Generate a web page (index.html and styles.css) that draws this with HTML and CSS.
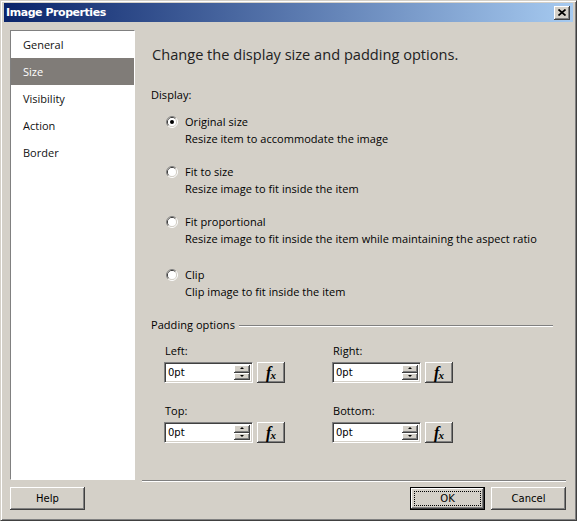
FILE: index.html
```html
<!DOCTYPE html>
<html>
<head>
<meta charset="utf-8">
<link rel="stylesheet" href="styles.css">
</head>
<body>
<div class="window">
  <div class="titlebar">
    <span class="title">Image Properties</span>
    <span class="close"><svg width="8" height="7" viewBox="0 0 8 7"><path d="M0.5 0.5 L7.5 6.5 M7.5 0.5 L0.5 6.5" stroke="#000" stroke-width="1.7" fill="none"/></svg></span>
  </div>
  <div class="main">
    <ul class="nav">
      <li>General</li>
      <li class="sel">Size</li>
      <li>Visibility</li>
      <li>Action</li>
      <li>Border</li>
    </ul>
    <div class="panel">
      <h1 class="heading">Change the display size and padding options.</h1>
      <div class="section-label">Display:</div>
      <div class="options">
        <div class="opt">
          <svg class="radio" width="12" height="12" viewBox="0 0 12 12"><path d="M2.11 9.89 A5.5 5.5 0 0 1 9.89 2.11" stroke="#808080" fill="none"/><path d="M9.89 2.11 A5.5 5.5 0 0 1 2.11 9.89" stroke="#fff" fill="none"/><path d="M2.82 9.18 A4.5 4.5 0 0 1 9.18 2.82" stroke="#404040" fill="none"/><path d="M9.18 2.82 A4.5 4.5 0 0 1 2.82 9.18" stroke="#d4d0c8" fill="none"/><circle cx="6" cy="6" r="4" fill="#fff"/><circle cx="6" cy="6" r="2" fill="#000"/></svg>
          <div class="opt-text"><div>Original size</div><div>Resize item to accommodate the image</div></div>
        </div>
        <div class="opt">
          <svg class="radio" width="12" height="12" viewBox="0 0 12 12"><path d="M2.11 9.89 A5.5 5.5 0 0 1 9.89 2.11" stroke="#808080" fill="none"/><path d="M9.89 2.11 A5.5 5.5 0 0 1 2.11 9.89" stroke="#fff" fill="none"/><path d="M2.82 9.18 A4.5 4.5 0 0 1 9.18 2.82" stroke="#404040" fill="none"/><path d="M9.18 2.82 A4.5 4.5 0 0 1 2.82 9.18" stroke="#d4d0c8" fill="none"/><circle cx="6" cy="6" r="4" fill="#fff"/></svg>
          <div class="opt-text"><div>Fit to size</div><div>Resize image to fit inside the item</div></div>
        </div>
        <div class="opt">
          <svg class="radio" width="12" height="12" viewBox="0 0 12 12"><path d="M2.11 9.89 A5.5 5.5 0 0 1 9.89 2.11" stroke="#808080" fill="none"/><path d="M9.89 2.11 A5.5 5.5 0 0 1 2.11 9.89" stroke="#fff" fill="none"/><path d="M2.82 9.18 A4.5 4.5 0 0 1 9.18 2.82" stroke="#404040" fill="none"/><path d="M9.18 2.82 A4.5 4.5 0 0 1 2.82 9.18" stroke="#d4d0c8" fill="none"/><circle cx="6" cy="6" r="4" fill="#fff"/></svg>
          <div class="opt-text"><div>Fit proportional</div><div>Resize image to fit inside the item while maintaining the aspect ratio</div></div>
        </div>
        <div class="opt opt-last">
          <svg class="radio" width="12" height="12" viewBox="0 0 12 12"><path d="M2.11 9.89 A5.5 5.5 0 0 1 9.89 2.11" stroke="#808080" fill="none"/><path d="M9.89 2.11 A5.5 5.5 0 0 1 2.11 9.89" stroke="#fff" fill="none"/><path d="M2.82 9.18 A4.5 4.5 0 0 1 9.18 2.82" stroke="#404040" fill="none"/><path d="M9.18 2.82 A4.5 4.5 0 0 1 2.82 9.18" stroke="#d4d0c8" fill="none"/><circle cx="6" cy="6" r="4" fill="#fff"/></svg>
          <div class="opt-text"><div>Clip</div><div>Clip image to fit inside the item</div></div>
        </div>
      </div>
      <div class="group-head"><span>Padding options</span><span class="etch"></span></div>
      <div class="pad-grid">
        <div class="field">
          <div class="field-label">Left:</div>
          <div class="field-row">
            <div class="spin"><span class="val">0pt</span><span class="spin-btns"><span class="sb"><span class="arr-up"></span></span><span class="sb"><span class="arr-dn"></span></span></span></div>
            <span class="fx"><span class="f">f</span><span class="x">x</span></span>
          </div>
        </div>
        <div class="field">
          <div class="field-label">Right:</div>
          <div class="field-row">
            <div class="spin"><span class="val">0pt</span><span class="spin-btns"><span class="sb"><span class="arr-up"></span></span><span class="sb"><span class="arr-dn"></span></span></span></div>
            <span class="fx"><span class="f">f</span><span class="x">x</span></span>
          </div>
        </div>
        <div class="field">
          <div class="field-label">Top:</div>
          <div class="field-row">
            <div class="spin"><span class="val">0pt</span><span class="spin-btns"><span class="sb"><span class="arr-up"></span></span><span class="sb"><span class="arr-dn"></span></span></span></div>
            <span class="fx"><span class="f">f</span><span class="x">x</span></span>
          </div>
        </div>
        <div class="field">
          <div class="field-label">Bottom:</div>
          <div class="field-row">
            <div class="spin"><span class="val">0pt</span><span class="spin-btns"><span class="sb"><span class="arr-up"></span></span><span class="sb"><span class="arr-dn"></span></span></span></div>
            <span class="fx"><span class="f">f</span><span class="x">x</span></span>
          </div>
        </div>
      </div>
    </div>
  </div>
  <div class="footer">
    <span class="btn">Help</span>
    <span class="spacer"></span>
    <span class="btn btn-default"><span class="focus">OK</span></span>
    <span class="btn">Cancel</span>
  </div>
</div>
</body>
</html>
```

FILE: styles.css
```css
html, body {
  margin: 0;
  padding: 0;
  background: #d4d0c8;
}
body {
  font-family: "Open Sans", "Noto Sans", sans-serif;
  color: #000;
}
.window {
  width: 577px;
  height: 521px;
  box-sizing: border-box;
  background: #d4d0c8;
  border: 1px solid;
  border-color: #d4d0c8 #404040 #404040 #d4d0c8;
  box-shadow: inset 1px 1px #fff, inset -1px -1px #808080;
  padding: 2px 3px 3px 3px;
  display: flex;
  flex-direction: column;
}
.titlebar {
  height: 19px;
  flex: none;
  background: linear-gradient(to right, #0a246a, #a6caf0);
  display: flex;
  align-items: center;
  justify-content: space-between;
  padding: 0 3px 0 2px;
}
.title {
  color: #fff;
  font-family: "DejaVu Sans", sans-serif;
  font-weight: bold;
  font-size: 11px;
  letter-spacing: -0.45px;
}
.close {
  width: 16px;
  height: 14px;
  box-sizing: border-box;
  background: #d4d0c8;
  box-shadow: inset -1px -1px #404040, inset 1px 1px #fff, inset -2px -2px #808080;
  display: flex;
  align-items: center;
  justify-content: center;
  padding: 0 1px 1px 0;
}
.close svg { display: block; }
.main {
  flex: 1;
  display: flex;
  margin-top: 8px;
  padding: 0 7px 0 6px;
  min-height: 0;
}
.nav {
  list-style: none;
  margin: 0 0 1px 0;
  padding: 0;
  width: 125px;
  box-sizing: border-box;
  background: #fff;
  border: 1px solid;
  border-color: #808080 #fff #fff #808080;
  font-size: 11px;
}
.nav li {
  height: 27px;
  line-height: 27px;
  padding-left: 12px;
  color: #111;
}
.nav li.sel {
  background: #807c78;
  color: #fff;
}
.panel {
  flex: 1;
  margin-left: 7px;
  border-bottom: 1px solid #808080;
  box-shadow: 0 1px #fff;
  padding: 14px 13px 0 9px;
  font-size: 11px;
  letter-spacing: 0.05px;
}
.heading {
  margin: 0 0 0 1px;
  font-size: 14.6px;
  line-height: 20px;
  font-weight: normal;
  letter-spacing: 0;
  color: #222;
}
.section-label {
  margin-top: 23px;
  line-height: 16px;
}
.options {
  margin-top: 10px;
}
.opt {
  display: flex;
  align-items: flex-start;
  padding-left: 15px;
  line-height: 17px;
}
.opt + .opt { margin-top: 16px; }
.opt.opt-last { margin-top: 19px; }
.radio {
  flex: none;
  margin: 3px 7px 0 0;
  display: block;
}
.group-head {
  margin-top: 17px;
  line-height: 16px;
  display: flex;
  align-items: center;
  gap: 4px;
}
.etch {
  flex: 1;
  height: 1px;
  background: #808080;
  box-shadow: 0 1px #fff;
}
.pad-grid {
  margin-top: 10px;
  padding-left: 13px;
  display: grid;
  grid-template-columns: 168px 168px;
  row-gap: 20px;
}
.field-label {
  line-height: 16px;
  padding-left: 1px;
}
.field-row {
  margin-top: 3px;
  display: flex;
  gap: 4px;
}
.spin {
  width: 89px;
  height: 21px;
  box-sizing: border-box;
  background: #fff;
  border: 1px solid;
  border-color: #808080 #fff #fff #808080;
  box-shadow: inset 1px 1px #404040, inset -1px -1px #d4d0c8;
  display: flex;
  align-items: stretch;
  padding: 2px 2px 2px 3px;
}
.val {
  flex: 1;
  font-family: "DejaVu Sans", sans-serif;
  font-size: 10px;
  line-height: 15px;
  letter-spacing: 0;
}
.spin-btns {
  width: 16px;
  display: flex;
  flex-direction: column;
}
.sb {
  flex: 1;
  background: #d4d0c8;
  box-shadow: inset -1px -1px #404040, inset 1px 1px #fff, inset -2px -2px #808080;
  display: flex;
  align-items: center;
  justify-content: center;
}
.arr-up {
  width: 0;
  height: 0;
  border-left: 2px solid transparent;
  border-right: 2px solid transparent;
  border-bottom: 2px solid #000;
  margin: 0 1px 1px 0;
}
.arr-dn {
  width: 0;
  height: 0;
  border-left: 2px solid transparent;
  border-right: 2px solid transparent;
  border-top: 2px solid #000;
  margin: 0 1px 1px 0;
}
.fx {
  width: 28px;
  height: 21px;
  box-sizing: border-box;
  background: #d4d0c8;
  box-shadow: inset -1px -1px #404040, inset 1px 1px #fff, inset -2px -2px #808080;
  display: flex;
  align-items: center;
  justify-content: center;
  font-family: "Liberation Serif", serif;
  font-weight: bold;
  font-style: italic;
  color: #000;
}
.fx .f { font-size: 16px; line-height: 15px; }
.fx .x { font-size: 11px; line-height: 11px; margin-top: 5px; margin-left: -1px; }
.footer {
  flex: none;
  display: flex;
  gap: 6px;
  padding: 6px 7px 7px 6px;
}
.spacer { flex: 1; }
.btn {
  width: 75px;
  height: 23px;
  box-sizing: border-box;
  background: #d4d0c8;
  box-shadow: inset -1px -1px #404040, inset 1px 1px #fff, inset -2px -2px #808080;
  display: flex;
  align-items: center;
  justify-content: center;
  font-family: "DejaVu Sans", sans-serif;
  font-size: 10px;
  color: #000;
}
.btn-default {
  border: 1px solid #000;
  padding: 3px;
}
.focus {
  flex: 1;
  align-self: stretch;
  border: 1px dotted #000;
  display: flex;
  align-items: center;
  justify-content: center;
}
```
